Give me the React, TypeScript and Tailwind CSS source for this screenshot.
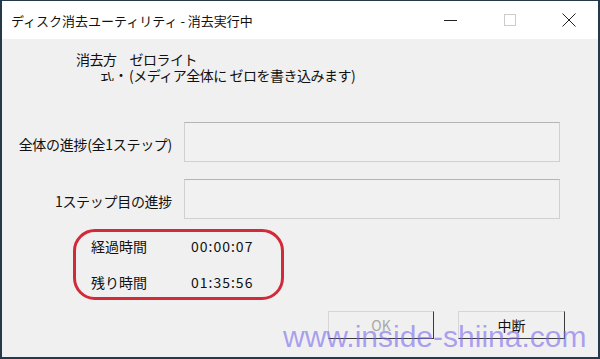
import React from "react";

const jp = "font-['Noto_Sans_CJK_JP','Noto_Sans',sans-serif]";

function TitleBar() {
  return (
    <div className="flex h-[38px] items-center bg-white">
      <div className="flex-1 pl-[9px] text-[13px] leading-none text-[#111]">
        ディスク消去ユーティリティ - 消去実行中
      </div>
      {/* minimize */}
      <div className="flex w-[60px] justify-center">
        <div className="h-px w-[13px] bg-[#222]" />
      </div>
      {/* maximize (disabled) */}
      <div className="flex w-[60px] justify-center">
        <div className="h-[12px] w-[12px] border border-[#cccccc]" />
      </div>
      {/* close */}
      <div className="flex w-[58px] justify-center">
        <svg width="14" height="14" viewBox="0 0 14 14">
          <path d="M0.5 0.5 L13.5 13.5 M13.5 0.5 L0.5 13.5" stroke="#222" strokeWidth="1" fill="none" />
        </svg>
      </div>
    </div>
  );
}

function ProgressRow({ label, className }: { label: string; className?: string }) {
  return (
    <div className={`flex items-center ${className ?? ""}`}>
      <div className="w-[170px] pt-[4px] text-right text-[14px] tracking-[-0.3px] text-[#111]">{label}</div>
      <div className="ml-[12px] h-[40px] w-[376px] border border-[#d0d0d0] border-t-[#b4b4b4] bg-[#f1f1f1]" />
    </div>
  );
}

function TimeRow({ label, value }: { label: string; value: string }) {
  return (
    <div className="flex items-center text-[14px] text-[#111]">
      <div className="w-[100px]">{label}</div>
      <div className="tracking-[1px]">{value}</div>
    </div>
  );
}

export default function App() {
  return (
    <div className={`relative h-[359px] w-[600px] overflow-hidden ${jp}`}>
      <div className="flex h-full flex-col border-x-2 border-t border-b-2 border-[#26394b] bg-[#f0f0f0]">
        <TitleBar />

        {/* method */}
        <div className="pt-[12px] text-[14px] leading-[16px] text-[#111]">
          <div className="flex pl-[74px]">
            <span className="tracking-[-0.5px]">消去方</span>
            <span className="ml-[13px] tracking-[-0.5px]">ゼロライト</span>
          </div>
          <div className="flex items-end pl-[98px]">
            <div className="mb-[2px] h-[9px] overflow-hidden">
              <div className="-mt-[6px] leading-[16px]">式・</div>
            </div>
            <span className="ml-[1px] tracking-[-0.5px]">(メディア全体に ゼロを書き込みます)</span>
          </div>
        </div>

        <ProgressRow className="mt-[39px]" label="全体の進捗(全1ステップ)" />
        <ProgressRow className="mt-[17px]" label="1ステップ目の進捗" />

        {/* time box, circled */}
        <div className="ml-[71px] mt-[10px] flex h-[71px] w-[211px] flex-col justify-center gap-[15px] rounded-[22px] border-[3px] border-[#d12a3a] pl-[15px]">
          <TimeRow label="経過時間" value="00:00:07" />
          <TimeRow label="残り時間" value="01:35:56" />
        </div>

        <div className="mt-[11px] flex justify-end gap-[24px] pr-[33px]">
          <div className="flex h-[28px] w-[106px] items-center justify-center border border-[#d6d6d6] border-b-[#3a3a3a] border-r-[#3a3a3a] text-[14px] text-[#a8a8a8]">
            OK
          </div>
          <div className="flex h-[28px] w-[107px] items-center justify-center border border-[#d6d6d6] border-b-[#3a3a3a] border-r-[#3a3a3a] text-[14px] text-[#111]">
            中断
          </div>
        </div>
      </div>

      {/* watermark */}
      <div className="pointer-events-none absolute left-[283px] top-[322px] font-['Liberation_Sans',sans-serif] text-[30px] leading-none text-[rgba(123,104,238,0.6)]">
        www.inside-shiina.com
      </div>
    </div>
  );
}
